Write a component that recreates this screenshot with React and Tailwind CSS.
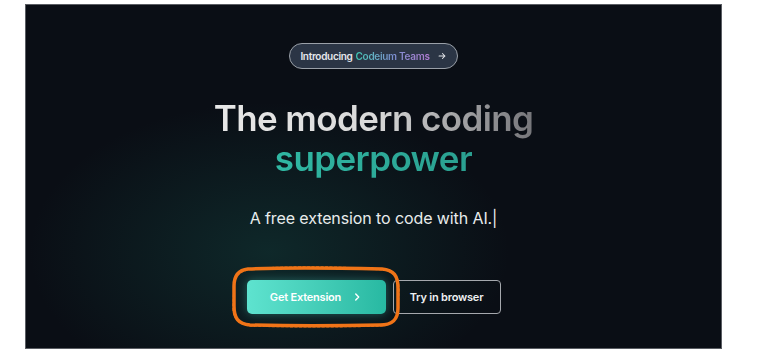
import React from "react";

function ChevronRight({ className }) {
  return (
    <svg viewBox="0 0 24 24" className={className} fill="none" stroke="currentColor" strokeWidth="3.5" strokeLinecap="round" strokeLinejoin="round">
      <path d="M9 5l7 7-7 7" />
    </svg>
  );
}

function ArrowRight({ className }) {
  return (
    <svg viewBox="0 0 24 24" className={className} fill="none" stroke="currentColor" strokeWidth="2.5" strokeLinecap="round" strokeLinejoin="round">
      <path d="M5 12h14M13 6l6 6-6 6" />
    </svg>
  );
}

function Scribble() {
  return (
    <svg
      className="pointer-events-none absolute left-[-15px] top-[-14px] h-[62px] w-[168px] overflow-visible"
      viewBox="0 0 168 62"
      fill="none"
    >
      <path
        d="M16 3 C60 1, 110 2, 150 3 C162 4, 166 10, 166 22 L166 42 C166 54, 160 59, 148 59 C100 60, 60 60, 18 59 C6 58, 2 52, 2 40 L2 20 C2 9, 7 4, 16 3 Z"
        stroke="#f07418"
        strokeWidth="3.5"
        strokeLinejoin="round"
      />
      <path
        d="M30 2 C80 0, 120 1, 152 4 C163 6, 167 12, 167 24 L166 44 C165 55, 158 60, 146 60 C110 61, 60 61, 20 60 C8 59, 1 53, 1 42 L2 18 C3 8, 9 3, 30 2"
        stroke="#f07418"
        strokeWidth="1.5"
        strokeDasharray="3 1.5"
        opacity="0.8"
      />
    </svg>
  );
}

export default function App() {
  return (
    <div className="h-[357px] w-[760px] bg-white pl-[25px] pt-[4px] font-['Inter',sans-serif]">
      <div className="relative h-[345px] w-[697px] overflow-hidden border border-[#5a5d63] bg-[#0a0e15]">
        <div className="absolute inset-0 bg-[radial-gradient(ellipse_240px_150px_at_35%_72%,rgba(24,95,85,0.32),transparent)]" />
        <div className="relative flex flex-col items-center">
          <div className="mt-[38px] flex h-[26px] items-center gap-[3px] rounded-full border border-[#9aa0a8] bg-[#2b3545] px-[10px] text-[10px] font-semibold tracking-[-0.3px]">
            <span className="text-[#e6e8ec]">Introducing</span>
            <span className="bg-gradient-to-r from-[#3cc9b4] via-[#7a8fd0] to-[#b07ad0] bg-clip-text text-transparent">
              Codeium Teams
            </span>
            <ArrowRight className="ml-[4px] h-[10px] w-[10px] text-[#e6e8ec]" />
          </div>

          <h1 className="mt-[29px] text-center text-[35px] font-semibold leading-[40px] tracking-[-0.6px]">
            <span className="bg-gradient-to-r from-[#e8e8e8] via-[#dadada] to-[#76767a] bg-clip-text text-transparent">
              The modern coding
            </span>
            <br />
            <span className="bg-gradient-to-r from-[#30b8a3] to-[#2a9f90] bg-clip-text text-transparent">
              superpower
            </span>
          </h1>

          <p className="mt-[29px] text-[16px] leading-[22px] tracking-[-0.1px] text-[#e8ecec]">
            A free extension to code with AI.|
          </p>

          <div className="mt-[51px] flex items-center gap-[7px]">
            <div className="relative">
              <button className="flex h-[34px] w-[139px] items-center justify-center gap-[11px] rounded-[5px] bg-gradient-to-r from-[#5ee3cf] to-[#27b9a2] text-[11px] font-semibold tracking-[-0.2px] text-white shadow-[0_0_10px_rgba(80,220,200,0.35)]">
                Get Extension
                <ChevronRight className="h-[10px] w-[10px]" />
              </button>
              <Scribble />
            </div>
            <button className="flex h-[34px] w-[108px] items-center justify-center rounded-[4px] border border-[#a5a8ad] text-[11px] font-semibold tracking-[-0.2px] text-[#eef0f2]">
              Try in browser
            </button>
          </div>
        </div>
      </div>
    </div>
  );
}
